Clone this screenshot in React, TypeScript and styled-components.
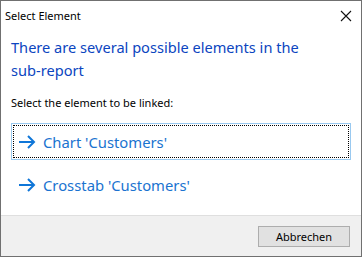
import { FC } from "react";
import styled, { createGlobalStyle } from "styled-components";

const GlobalStyle = createGlobalStyle`
  html, body {
    margin: 0;
    padding: 0;
    background: #ffffff;
  }
  body {
    font-family: "Segoe UI", "Noto Sans", "Liberation Sans", sans-serif;
  }
`;

interface ILink {
  label: string;
  focused?: boolean;
}

const links: ILink[] = [
  { label: "Chart 'Customers'", focused: true },
  { label: "Crosstab 'Customers'" },
];

const Arrow: FC = () => (
  <svg width="18" height="14" viewBox="0 0 18 14" fill="none">
    <path d="M1 7h15M10 1l6 6-6 6" stroke="#0f76d8" strokeWidth="2" />
  </svg>
);

const App: FC = () => {
  return (
    <>
      <GlobalStyle />
      <StyledWindow>
        <StyledTitleBar>
          <span>Select Element</span>
          <StyledClose>
            <svg width="12" height="12" viewBox="0 0 12 12">
              <path d="M1 1l10 10M11 1L1 11" stroke="#111" strokeWidth="1.1" />
            </svg>
          </StyledClose>
        </StyledTitleBar>
        <StyledContent>
          <StyledHeading>There are several possible elements in the sub-report</StyledHeading>
          <StyledPrompt>Select the element to be linked:</StyledPrompt>
          <StyledLinks>
            {links.map((link) => (
              <StyledLink key={link.label} $focused={link.focused}>
                <StyledLinkInner $focused={link.focused}>
                  <Arrow />
                  <span>{link.label}</span>
                </StyledLinkInner>
              </StyledLink>
            ))}
          </StyledLinks>
        </StyledContent>
        <StyledFooter>
          <StyledButton>Abbrechen</StyledButton>
        </StyledFooter>
      </StyledWindow>
    </>
  );
};

const StyledWindow = styled.div`
  box-sizing: border-box;
  width: 362px;
  height: 257px;
  border: 1px solid #707070;
  display: flex;
  flex-direction: column;
  background: #fff;
`;

const StyledTitleBar = styled.div`
  height: 29px;
  display: flex;
  align-items: center;
  justify-content: space-between;
  padding: 0 9px 0 4px;
  font-size: 11px;
  color: #000;
`;

const StyledClose = styled.div`
  display: flex;
  align-items: center;
`;

const StyledContent = styled.div`
  flex: 1;
  padding: 6px 10px 0 10px;
`;

const StyledHeading = styled.h1`
  margin: 0;
  font-size: 14.6px;
  font-weight: normal;
  line-height: 23px;
  color: #0b45c0;
  width: 320px;
`;

const StyledPrompt = styled.p`
  margin: 13px 0 0;
  font-size: 11px;
  line-height: 16px;
  color: #000;
`;

const StyledLinks = styled.div`
  margin-top: 12px;
  display: flex;
  flex-direction: column;
  gap: 6px;
`;

const StyledLink = styled.div<{ $focused?: boolean }>`
  height: 37px;
  box-sizing: border-box;
  padding: 1px;
  border: 1px solid ${(p) => (p.$focused ? "#99c9f0" : "transparent")};
`;

const StyledLinkInner = styled.div<{ $focused?: boolean }>`
  box-sizing: border-box;
  height: 100%;
  display: flex;
  align-items: center;
  gap: 7px;
  padding-left: 4px;
  border: 1px dotted ${(p) => (p.$focused ? "#000" : "transparent")};
  font-size: 14.8px;
  color: #1a73d0;
`;

const StyledFooter = styled.div`
  height: 41px;
  box-sizing: border-box;
  border-top: 1px solid #dfdfdf;
  background: #f0f0f0;
  display: flex;
  align-items: center;
  justify-content: flex-end;
  padding-right: 11px;
`;

const StyledButton = styled.button`
  width: 92px;
  height: 21px;
  box-sizing: border-box;
  border: 1px solid #adadad;
  background: #e1e1e1;
  font-family: "Segoe UI", "Noto Sans", "Liberation Sans", sans-serif;
  font-size: 11px;
  color: #000;
  padding: 0;
`;

export default App;
